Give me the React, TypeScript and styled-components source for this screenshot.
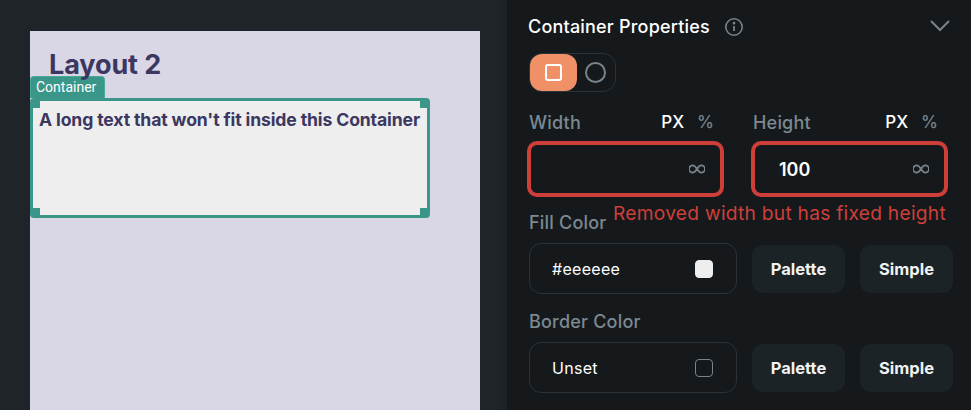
import React from 'react';
import styled, { createGlobalStyle } from 'styled-components';

const Global = createGlobalStyle`
  html, body { margin: 0; padding: 0; background: #15191c; }
  body { width: 971px; height: 410px; overflow: hidden; font-family: "Inter", "Liberation Sans", sans-serif; }
  * { box-sizing: border-box; }
`;

const Page = styled.div`
  display: flex;
  width: 971px;
  height: 410px;
  overflow: hidden;
`;

const Stage = styled.div`
  width: 500px;
  padding: 31px 0 0 30px;
  background: #1f2428;
`;

const Divider = styled.div`
  width: 7px;
  background: #1c2226;
`;

const Canvas = styled.div`
  width: 450px;
  height: 379px;
  background: #d9d6e6;
  color: #3c3761;
  font-family: "Inter", sans-serif;
`;

const Title = styled.h1`
  margin: 0;
  height: 45px;
  padding: 18px 0 0 19px;
  font-size: 27px;
  line-height: 32px;
  font-weight: 700;
  letter-spacing: -0.1px;
`;

const Tag = styled.div`
  width: 75px;
  height: 22px;
  padding: 0 0 0 5px;
  border-radius: 4px 4px 0 0;
  background: #3a9688;
  border: 1px solid #4aa899;
  border-bottom: 0;
  color: #fff;
  font-family: "Roboto", sans-serif;
  font-size: 14px;
  line-height: 20px;
`;

const Box = styled.div`
  position: relative;
  width: 400px;
  height: 120px;
  padding: 8px 6px;
  background: #eeeeee;
  border: 3px solid #3a9688;
  border-radius: 4px;
`;

const Handle = styled.span<{ $top?: boolean; $left?: boolean }>`
  position: absolute;
  width: 7px;
  height: 7px;
  background: #3a9688;
  ${p => (p.$top ? 'top: 0;' : 'bottom: 0;')}
  ${p => (p.$left ? 'left: 0;' : 'right: 0;')}
`;

const BoxText = styled.div`
  font-size: 17.6px;
  line-height: 22px;
  font-weight: 700;
  letter-spacing: -0.13px;
  white-space: nowrap;
`;

const Panel = styled.div`
  position: relative;
  flex: 1;
  padding: 0 18px 0 21px;
  background: #15191c;
  color: #fff;
`;

const Header = styled.div`
  display: flex;
  align-items: center;
  height: 53px;
  font-size: 18px;
  font-weight: 500;
`;

const HeaderTitle = styled.span`
  margin-right: 14px;
  letter-spacing: 0.2px;
`;

const Chevron = styled.svg`
  margin: 0 2px 3px auto;
`;

const Toggle = styled.div`
  display: flex;
  width: 87px;
  height: 39px;
  margin-left: 1px;
  border: 1px solid #2b3238;
  border-radius: 13px;
`;

const ToggleOption = styled.div<{ $active?: boolean }>`
  display: flex;
  flex: none;
  align-items: center;
  justify-content: center;
  width: ${p => (p.$active ? 47 : 37)}px;
  height: 37px;
  border-radius: 12px;
  background: ${p => (p.$active ? '#f09066' : 'transparent')};
`;

const Shape = styled.span<{ $round?: boolean }>`
  width: ${p => (p.$round ? 21 : 17)}px;
  height: ${p => (p.$round ? 21 : 17)}px;
  border: 2px solid ${p => (p.$round ? '#78838c' : '#fff')};
  border-radius: ${p => (p.$round ? '50%' : '3px')};
`;

const Sizes = styled.div`
  display: flex;
  gap: 27px;
  margin: 18px 0 0 -1px;
`;

const SizeField = styled.div`
  width: 197px;
`;

const SizeHead = styled.div`
  display: flex;
  align-items: center;
  height: 24px;
  margin-bottom: 7px;
  padding: 0 10px 0 2px;
`;

const Label = styled.span`
  color: #7d8891;
  font-size: 18px;
  font-weight: 500;
  letter-spacing: 0.2px;
`;

const Unit = styled.span<{ $active?: boolean }>`
  color: ${p => (p.$active ? '#fff' : '#78838c')};
  font-size: 17px;
  font-weight: 500;
  margin-left: ${p => (p.$active ? 'auto' : '13px')};
`;

const SizeInput = styled.div`
  display: flex;
  align-items: center;
  justify-content: space-between;
  height: 56px;
  padding: 0 15px 0 24px;
  border: 4px solid #cf3f3a;
  border-radius: 10px;
  font-size: 18px;
  font-weight: 600;
`;

const Note = styled.div`
  position: absolute;
  left: 106px;
  top: 202px;
  color: #cf3f3a;
  font-size: 19.2px;
  line-height: 22px;
  letter-spacing: 0.25px;
  white-space: nowrap;
`;

const ColorLabel = styled.div<{ $top: number }>`
  margin: ${p => p.$top}px 0 8px 1px;
  height: 24px;
  line-height: 24px;
`;

const ColorRow = styled.div`
  display: flex;
  align-items: center;
  gap: 15px;
  margin-left: 1px;
`;

const ColorInput = styled.div`
  display: flex;
  align-items: center;
  justify-content: space-between;
  width: 208px;
  height: 51px;
  padding: 0 23px 0 22px;
  border: 1px solid #2b3238;
  border-radius: 12px;
  font-size: 16px;
  letter-spacing: 0.3px;
`;

const Swatch = styled.span<{ $fill?: string }>`
  width: 18px;
  height: 18px;
  border-radius: 4px;
  background: ${p => p.$fill ?? 'transparent'};
  border: 1px solid ${p => p.$fill ?? '#78838c'};
`;

const ActionButton = styled.div`
  display: flex;
  align-items: center;
  justify-content: center;
  width: 93px;
  height: 48px;
  border-radius: 11px;
  background: #1c2327;
  font-size: 16.5px;
  font-weight: 700;
  color: #f1f2f3;
`;

const InfoIcon = () => (
  <svg width="20" height="20" viewBox="0 0 20 20" fill="none" stroke="#78838c" strokeWidth="1.6">
    <circle cx="10" cy="10" r="8.2" />
    <path d="M10 9v5" strokeWidth="1.8" />
    <circle cx="10" cy="6.2" r="0.6" fill="#78838c" />
  </svg>
);

const ColorControls = ({ value, fill }: { value: string; fill?: string }) => (
  <ColorRow>
    <ColorInput>
      {value}
      <Swatch $fill={fill} />
    </ColorInput>
    <ActionButton>Palette</ActionButton>
    <ActionButton>Simple</ActionButton>
  </ColorRow>
);

const SizeControl = ({ label, value }: { label: string; value?: string }) => (
  <SizeField>
    <SizeHead>
      <Label>{label}</Label>
      <Unit $active>PX</Unit>
      <Unit>%</Unit>
    </SizeHead>
    <SizeInput>
      <span>{value}</span>
      <svg width="16" height="10" viewBox="0 0 16 10" fill="none" stroke="#78838c" strokeWidth="1.7">
        <path d="M8 5C6.500 2.600 5.200 1.400 3.700 1.400a3.600 3.600 0 0 0 0 7.200C5.200 8.600 6.500 7.400 8 5c1.500-2.400 2.800-3.600 4.300-3.600a3.600 3.600 0 0 1 0 7.200C10.800 8.600 9.500 7.400 8 5z" />
      </svg>
    </SizeInput>
  </SizeField>
);

const App = () => {
  return (
    <Page>
      <Global />
      <Stage>
        <Canvas>
          <Title>Layout 2</Title>
          <Tag>Container</Tag>
          <Box>
            <Handle $top $left />
            <Handle $top />
            <Handle $left />
            <Handle />
            <BoxText>A long text that won't fit inside this Container</BoxText>
          </Box>
        </Canvas>
      </Stage>
      <Divider />
      <Panel>
        <Header>
          <HeaderTitle>Container Properties</HeaderTitle>
          <InfoIcon />
          <Chevron width="22" height="13" viewBox="0 0 22 13" fill="none" stroke="#78838c" strokeWidth="2">
            <path d="M2 2l9 9 9-9" />
          </Chevron>
        </Header>
        <Toggle>
          <ToggleOption $active>
            <Shape />
          </ToggleOption>
          <ToggleOption>
            <Shape $round />
          </ToggleOption>
        </Toggle>
        <Sizes>
          <SizeControl label="Width" />
          <SizeControl label="Height" value="100" />
        </Sizes>
        <Note>Removed width but has fixed height</Note>
        <ColorLabel $top={14}>
          <Label>Fill Color</Label>
        </ColorLabel>
        <ColorControls value="#eeeeee" fill="#eeeeee" />
        <ColorLabel $top={16}>
          <Label>Border Color</Label>
        </ColorLabel>
        <ColorControls value="Unset" />
      </Panel>
    </Page>
  );
};

export default App;
